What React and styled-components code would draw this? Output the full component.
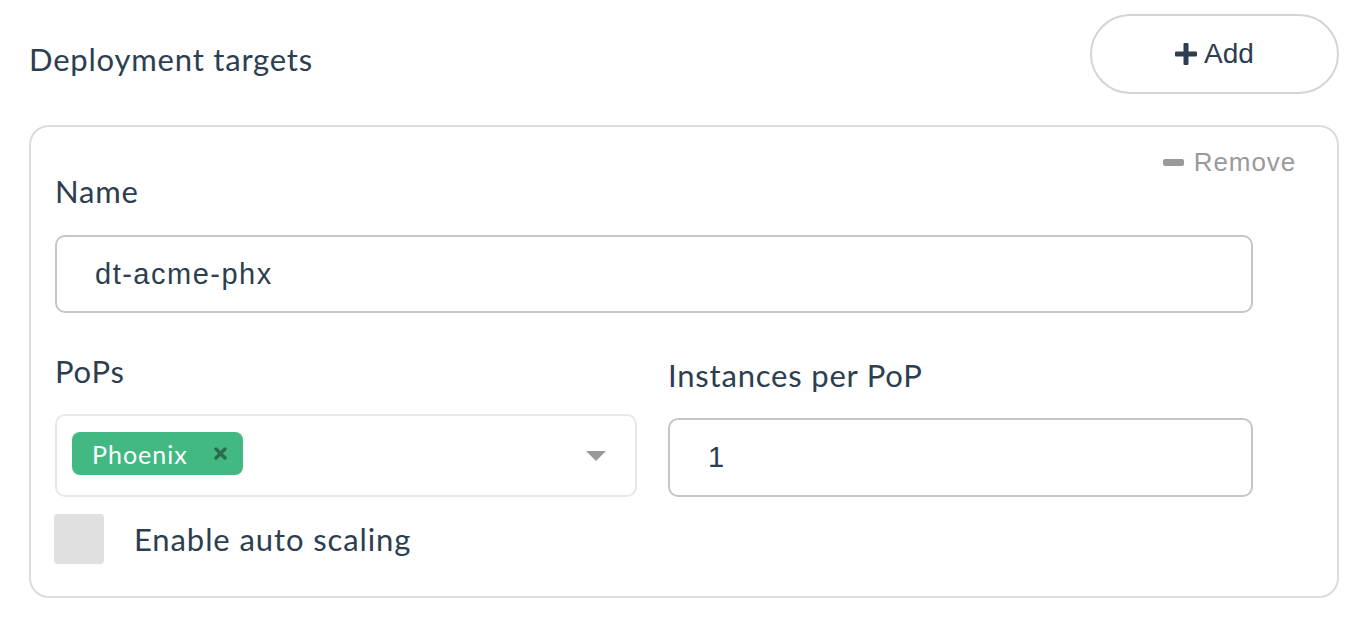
import React from "react"
import styled, { createGlobalStyle } from "styled-components"

const GlobalStyle = createGlobalStyle`
  html, body {
    margin: 0;
    padding: 0;
    background: #fff;
  }
  body {
    font-family: Lato, "Open Sans", sans-serif;
    color: #2c3e50;
  }
`

const Page = styled.div`
  padding: 14px 29px 0 29px;
`

const Header = styled.div`
  display: flex;
  justify-content: space-between;
  align-items: flex-start;
`

const Title = styled.h2`
  margin: 26px 0 0 0;
  font-size: 31px;
  font-weight: 400;
  line-height: 38px;
  letter-spacing: 0.8px;
`

const AddButton = styled.button`
  display: flex;
  align-items: center;
  justify-content: center;
  gap: 7px;
  width: 249px;
  height: 80px;
  border: 2px solid #d4d4d4;
  border-radius: 40px;
  background: #fff;
  color: #2c3e50;
  font-family: "Liberation Sans", Arial, sans-serif;
  font-size: 28px;
  padding: 0;
`

const Card = styled.section`
  margin-top: 31px;
  border: 2px solid #dcdcdc;
  border-radius: 20px;
  padding: 24px 41px 32px 24px;
`

const RemoveRow = styled.div`
  display: flex;
  justify-content: flex-end;
`

const RemoveLink = styled.span`
  display: flex;
  align-items: center;
  gap: 10px;
  color: #9a9a9a;
  font-family: "Liberation Sans", Arial, sans-serif;
  font-size: 26px;
  letter-spacing: 0.9px;
  line-height: 22px;
`

const Fields = styled.div`
  margin-right: 43px;
`

const Label = styled.label`
  display: block;
  font-size: 31px;
  line-height: 36px;
  letter-spacing: 0.8px;
  margin-bottom: ${p => p.gap || 25}px;
`

const TextInput = styled.div`
  box-sizing: border-box;
  height: ${p => p.height || 78}px;
  border: 2px solid #c6c6c6;
  border-radius: 10px;
  padding: 0 38px;
  display: flex;
  align-items: center;
  font-family: "Liberation Sans", Arial, sans-serif;
  font-size: 29px;
  letter-spacing: 1.5px;
  color: #2c3e50;
`

const Row = styled.div`
  display: grid;
  grid-template-columns: 582px 1fr;
  column-gap: 31px;
  align-items: end;
  margin-top: 40px;
`

const Column = styled.div`
  display: flex;
  flex-direction: column;
`

const Select = styled.div`
  box-sizing: border-box;
  height: 83px;
  border: 2px solid #e8e8e8;
  border-radius: 10px;
  padding: 0 29px 0 15px;
  display: flex;
  align-items: center;
  justify-content: space-between;
`

const Tag = styled.span`
  display: flex;
  align-items: center;
  height: 43px;
  margin-bottom: 4px;
  padding: 0 16px 0 20px;
  gap: 26px;
  background: #42b983;
  border-radius: 8px;
  color: #fff;
  font-size: 25px;
  letter-spacing: 1px;
`

const Caret = styled.span`
  width: 0;
  height: 0;
  border-left: 10px solid transparent;
  border-right: 10px solid transparent;
  border-top: 10px solid #999;
`

const CheckRow = styled.div`
  display: flex;
  align-items: center;
  gap: 30px;
  margin-top: 17px;
`

const CheckBox = styled.span`
  width: 50px;
  height: 50px;
  margin-left: -1px;
  border-radius: 4px;
  background: #e0e0e0;
`

const CheckLabel = styled.span`
  font-size: 31px;
  line-height: 36px;
  letter-spacing: 0.9px;
`

const PlusIcon = () => (
  <svg width="22" height="22" viewBox="0 0 22 22">
    <rect x="8.5" y="0" width="5" height="22" rx="1" fill="#2c3e50" />
    <rect x="0" y="8.5" width="22" height="5" rx="1" fill="#2c3e50" />
  </svg>
)

const MinusIcon = () => (
  <svg width="21" height="7" viewBox="0 0 21 7">
    <rect x="0" y="0" width="21" height="7" rx="2" fill="#9a9a9a" />
  </svg>
)

const CloseIcon = () => (
  <svg width="13" height="13" viewBox="0 0 13 13">
    <path
      d="M2 2 L11 11 M11 2 L2 11"
      stroke="#2a6b4d"
      strokeWidth="3.4"
      strokeLinecap="round"
    />
  </svg>
)

const App = () => (
  <Page>
    <GlobalStyle />
    <Header>
      <Title>Deployment targets</Title>
      <AddButton>
        <PlusIcon />
        Add
      </AddButton>
    </Header>
    <Card>
      <RemoveRow>
        <RemoveLink>
          <MinusIcon />
          Remove
        </RemoveLink>
      </RemoveRow>
      <Fields>
        <Label gap={26}>Name</Label>
        <TextInput>dt-acme-phx</TextInput>
        <Row>
          <Column>
            <Label>PoPs</Label>
            <Select>
              <Tag>
                Phoenix
                <CloseIcon />
              </Tag>
              <Caret />
            </Select>
          </Column>
          <Column>
            <Label>Instances per PoP</Label>
            <TextInput height={79}>1</TextInput>
          </Column>
        </Row>
        <CheckRow>
          <CheckBox />
          <CheckLabel>Enable auto scaling</CheckLabel>
        </CheckRow>
      </Fields>
    </Card>
  </Page>
)

export default App
